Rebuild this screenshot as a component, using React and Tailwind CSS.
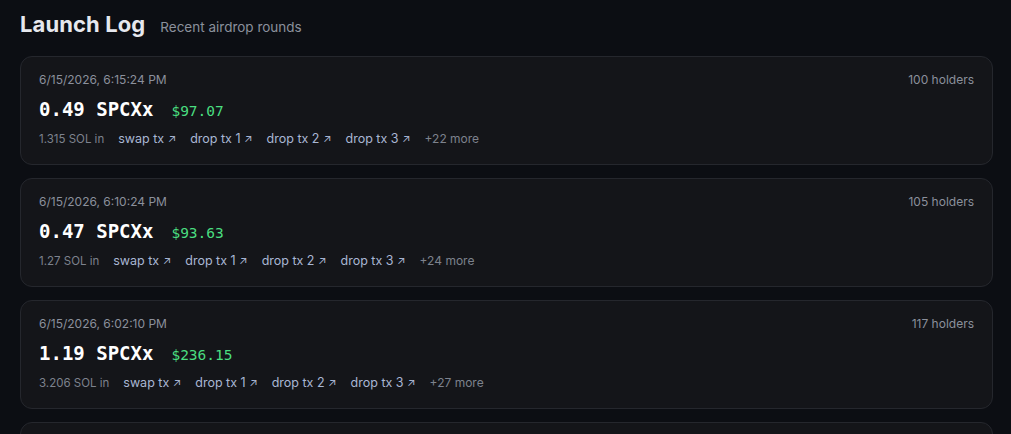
import React from "react";

const rounds = [
  { date: "6/15/2026, 6:15:24 PM", holders: 100, amt: "0.49", usd: "$97.07", sol: "1.315", more: 22 },
  { date: "6/15/2026, 6:10:24 PM", holders: 105, amt: "0.47", usd: "$93.63", sol: "1.27", more: 24 },
  { date: "6/15/2026, 6:02:10 PM", holders: 117, amt: "1.19", usd: "$236.15", sol: "3.206", more: 27 },
  { date: "6/15/2026, 5:55:02 PM", holders: 120, amt: "0.52", usd: "$101.20", sol: "1.402", more: 29 },
];

const sans = { fontFamily: "Inter, 'Noto Sans', sans-serif" };
const mono = { fontFamily: "'DejaVu Sans Mono', 'Liberation Mono', monospace" };

function Link({ children }) {
  return (
    <span className="text-[#a9b7d4] text-[12.5px]">
      {children} <span className="text-[11px]">↗</span>
    </span>
  );
}

export default function App() {
  return (
    <div className="h-[434px] overflow-hidden bg-[#0c0e13] pl-5 pr-[18px] pt-[8px]" style={sans}>
      <div className="flex items-baseline gap-[15px] h-[32px]">
        <h1 className="text-[22px] font-bold text-[#e6e8ee] tracking-[0.1px]">Launch Log</h1>
        <span className="text-[13.5px] text-[#8b909c]">Recent airdrop rounds</span>
      </div>
      <div className="mt-[16px] flex flex-col gap-[13px]">
        {rounds.map((r, i) => (
          <div key={i} className="h-[109px] shrink-0 rounded-[12px] border border-[#25272d] bg-[#141519] px-[18px] pt-[15px]">
            <div className="flex justify-between text-[12px] text-[#8b909c] leading-[16px]">
              <span>{r.date}</span>
              <span>{r.holders} holders</span>
            </div>
            <div className="mt-[7px] flex items-baseline gap-[18px] leading-[28px]">
              <span className="text-[19px] font-bold text-white" style={mono}>{r.amt} SPCXx</span>
              <span className="text-[14.5px] text-[#4ade80]" style={mono}>{r.usd}</span>
            </div>
            <div className="mt-[6px] flex items-center gap-[14px] leading-[16px]">
              <span className="text-[11.5px] text-[#7d828d]">{r.sol} SOL in</span>
              <Link>swap tx</Link>
              <Link>drop tx 1</Link>
              <Link>drop tx 2</Link>
              <Link>drop tx 3</Link>
              <span className="text-[12px] text-[#7d828d]">+{r.more} more</span>
            </div>
          </div>
        ))}
      </div>
    </div>
  );
}
